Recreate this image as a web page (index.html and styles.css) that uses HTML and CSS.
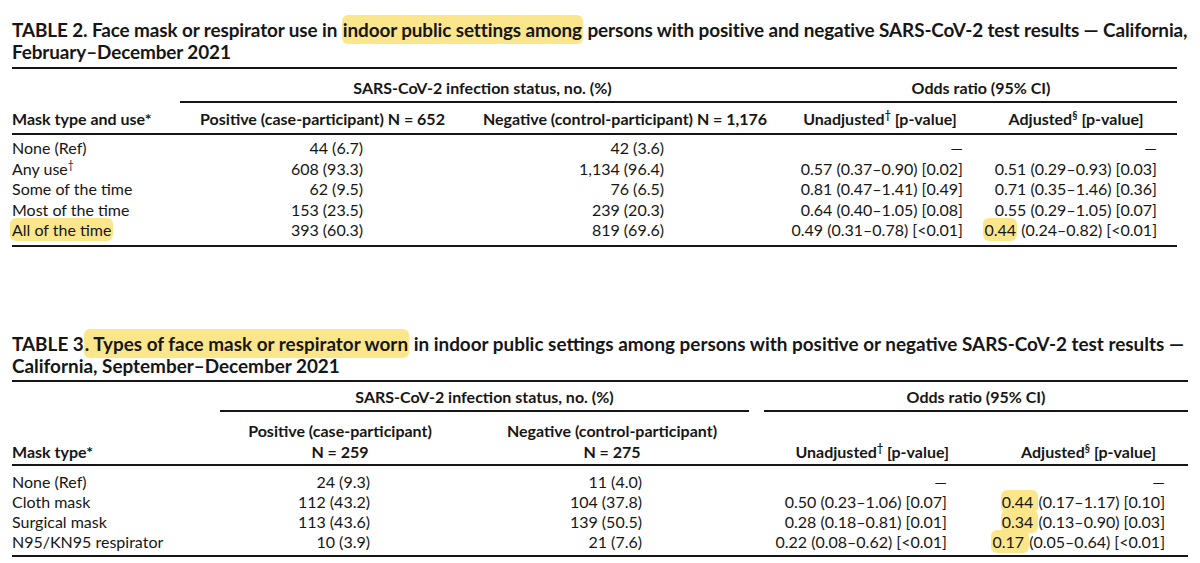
FILE: index.html
```html
<!DOCTYPE html>
<html lang="en">
<head>
<meta charset="utf-8">
<title>MMWR Tables 2 and 3</title>
<link rel="stylesheet" href="styles.css">
</head>
<body>
<div class="page">
  <section class="tbl t2">
    <h2 class="title">TABLE 2. Face mask or respirator use in <mark class="hl">indoor public settings among</mark> persons with positive and negative SARS-CoV-2 test results — California,<br>February–December 2021</h2>
    <table>
      <colgroup>
        <col class="c0"><col class="c1"><col class="c2"><col class="c3"><col class="c4">
      </colgroup>
      <thead>
        <tr class="spanrow">
          <th class="blank"></th>
          <th colspan="2" class="span"><div class="spanin">SARS-CoV-2 infection status, no. (%)</div></th>
          <th colspan="2" class="span"><div class="spanin">Odds ratio (95% CI)</div></th>
        </tr>
        <tr class="headrow">
          <th class="lab">Mask type and use*</th>
          <th>Positive (case-participant) N = 652</th>
          <th>Negative (control-participant) N = 1,176</th>
          <th class="hu">Unadjusted<sup>†</sup> [p-value]</th>
          <th class="ha">Adjusted<sup>§</sup> [p-value]</th>
        </tr>
      </thead>
      <tbody>
        <tr><td class="lab">None (Ref)</td><td class="v1">44 (6.7)</td><td class="v2">42 (3.6)</td><td class="v3">—</td><td class="v4">—</td></tr>
        <tr><td class="lab">Any use<sup>†</sup></td><td class="v1">608 (93.3)</td><td class="v2">1,134 (96.4)</td><td class="v3">0.57 (0.37–0.90) [0.02]</td><td class="v4">0.51 (0.29–0.93) [0.03]</td></tr>
        <tr><td class="lab">Some of the time</td><td class="v1">62 (9.5)</td><td class="v2">76 (6.5)</td><td class="v3">0.81 (0.47–1.41) [0.49]</td><td class="v4">0.71 (0.35–1.46) [0.36]</td></tr>
        <tr><td class="lab">Most of the time</td><td class="v1">153 (23.5)</td><td class="v2">239 (20.3)</td><td class="v3">0.64 (0.40–1.05) [0.08]</td><td class="v4">0.55 (0.29–1.05) [0.07]</td></tr>
        <tr><td class="lab"><mark class="hl hl-row">All of the time</mark></td><td class="v1">393 (60.3)</td><td class="v2">819 (69.6)</td><td class="v3">0.49 (0.31–0.78) [&lt;0.01]</td><td class="v4"><mark class="hl hl-num">0.44</mark> (0.24–0.82) [&lt;0.01]</td></tr>
      </tbody>
    </table>
  </section>

  <section class="tbl t3">
    <h2 class="title">TABLE 3<mark class="hl">. Types of face mask or respirator worn</mark> in indoor public settings among persons with positive or negative SARS-CoV-2 test results —<br>California, September–December 2021</h2>
    <table>
      <colgroup>
        <col class="c0"><col class="c1"><col class="c2"><col class="c3"><col class="c4">
      </colgroup>
      <thead>
        <tr class="spanrow">
          <th class="blank"></th>
          <th colspan="2" class="span"><div class="spanin left">SARS-CoV-2 infection status, no. (%)</div></th>
          <th colspan="2" class="span"><div class="spanin">Odds ratio (95% CI)</div></th>
        </tr>
        <tr class="headrow">
          <th class="lab">Mask type*</th>
          <th>Positive (case-participant)<br>N = 259</th>
          <th>Negative (control-participant)<br>N = 275</th>
          <th class="hu">Unadjusted<sup>†</sup> [p-value]</th>
          <th class="ha">Adjusted<sup>§</sup> [p-value]</th>
        </tr>
      </thead>
      <tbody>
        <tr><td class="lab">None (Ref)</td><td class="v1">24 (9.3)</td><td class="v2">11 (4.0)</td><td class="v3">—</td><td class="v4">—</td></tr>
        <tr><td class="lab">Cloth mask</td><td class="v1">112 (43.2)</td><td class="v2">104 (37.8)</td><td class="v3">0.50 (0.23–1.06) [0.07]</td><td class="v4"><mark class="hl hl-num">0.44 </mark>(0.17–1.17) [0.10]</td></tr>
        <tr><td class="lab">Surgical mask</td><td class="v1">113 (43.6)</td><td class="v2">139 (50.5)</td><td class="v3">0.28 (0.18–0.81) [0.01]</td><td class="v4"><mark class="hl hl-num">0.34 </mark>(0.13–0.90) [0.03]</td></tr>
        <tr><td class="lab">N95/KN95 respirator</td><td class="v1">10 (3.9)</td><td class="v2">21 (7.6)</td><td class="v3">0.22 (0.08–0.62) [&lt;0.01]</td><td class="v4"><mark class="hl hl-num">0.17 </mark>(0.05–0.64) [&lt;0.01]</td></tr>
      </tbody>
    </table>
  </section>
</div>
</body>
</html>
```

FILE: styles.css
```css
html, body {
  margin: 0;
  padding: 0;
  background: #ffffff;
}

body {
  font-family: "Lato", "Open Sans", "Liberation Sans", sans-serif;
  color: #161616;
}

.page {
  padding: 19px 0 0 12px;
  width: 1188px;
}

.title {
  margin: 0 0 4px 0;
  font-size: 18.9px;
  line-height: 22px;
  font-weight: 700;
  white-space: nowrap;
  letter-spacing: -0.1px;
}

.t3 .title {
  letter-spacing: 0;
}

.hl {
  background: #fce68c;
  color: inherit;
  border-radius: 6px;
  padding: 3px 1px;
}

.hl-row {
  padding: 2px 2px;
  margin-left: -2px;
}

.hl-num {
  padding: 2px 1px;
}

table {
  border-collapse: collapse;
  table-layout: fixed;
  border-top: 2px solid #161616;
  border-bottom: 2px solid #161616;
}

th, td {
  padding: 0;
  white-space: nowrap;
}

td {
  font-size: 16px;
}

th {
  font-size: 16px;
  font-weight: 700;
  text-align: center;
}

.lab {
  text-align: left;
}

sup {
  font-size: 10.5px;
  line-height: 0;
  vertical-align: 6px;
}

/* spanner row */
.spanrow th {
  line-height: 20px;
  padding-top: 9px;
  padding-bottom: 0;
}

.spanin {
  padding-bottom: 3px;
  border-bottom: 2px solid #161616;
}

/* header row */
.headrow th {
  border-bottom: 2px solid #161616;
}

/* data rows */
td {
  line-height: 20.5px;
}

.v1, .v2, .v3, .v4 {
  text-align: right;
}

/* ---------- Table 2 ---------- */
.t2 table { width: 1165px; }
.t2 .c0 { width: 168px; }
.t2 .c1 { width: 285px; }
.t2 .c2 { width: 320px; }
.t2 .c3 { width: 190px; }
.t2 .c4 { width: 202px; }

.t2 .headrow th {
  line-height: 20px;
  padding-top: 6px;
  padding-bottom: 4px;
}

.t2 tbody tr:first-child td { padding-top: 3px; }
.t2 tbody tr:last-child td { padding-bottom: 4px; }

.t2 .v1 { padding-right: 102px; }
.t2 .v2 { padding-right: 121px; }
.t2 .v3 { padding-right: 12px; }
.t2 .v4 { padding-right: 20px; }

/* ---------- Table 3 ---------- */
.t3 {
  margin-top: 86px;
}

.t3 .title {
  margin-bottom: 3px;
}

.t3 table { width: 1176px; }
.t3 .c0 { width: 208px; }
.t3 .c1 { width: 240px; }
.t3 .c2 { width: 304px; }
.t3 .c3 { width: 196px; }
.t3 .c4 { width: 228px; }

.t3 .spanrow th {
  padding-top: 5px;
}

.t3 .spanin.left {
  margin-right: 15px;
}

.t3 .headrow th {
  line-height: 21px;
  padding-top: 8px;
  padding-bottom: 2px;
  vertical-align: bottom;
}

.t3 .headrow .hu {
  text-align: right;
  padding-right: 11px;
}

.t3 .headrow .ha {
  text-align: right;
  padding-right: 32px;
}

.t3 td { line-height: 20.3px; }
.t3 tbody tr:first-child td { padding-top: 6px; }
.t3 tbody tr:last-child td { padding-bottom: 2px; }

.t3 .v1 { padding-right: 90px; }
.t3 .v2 { padding-right: 122px; }
.t3 .v3 { padding-right: 13px; }
.t3 .v4 { padding-right: 23px; }
```
